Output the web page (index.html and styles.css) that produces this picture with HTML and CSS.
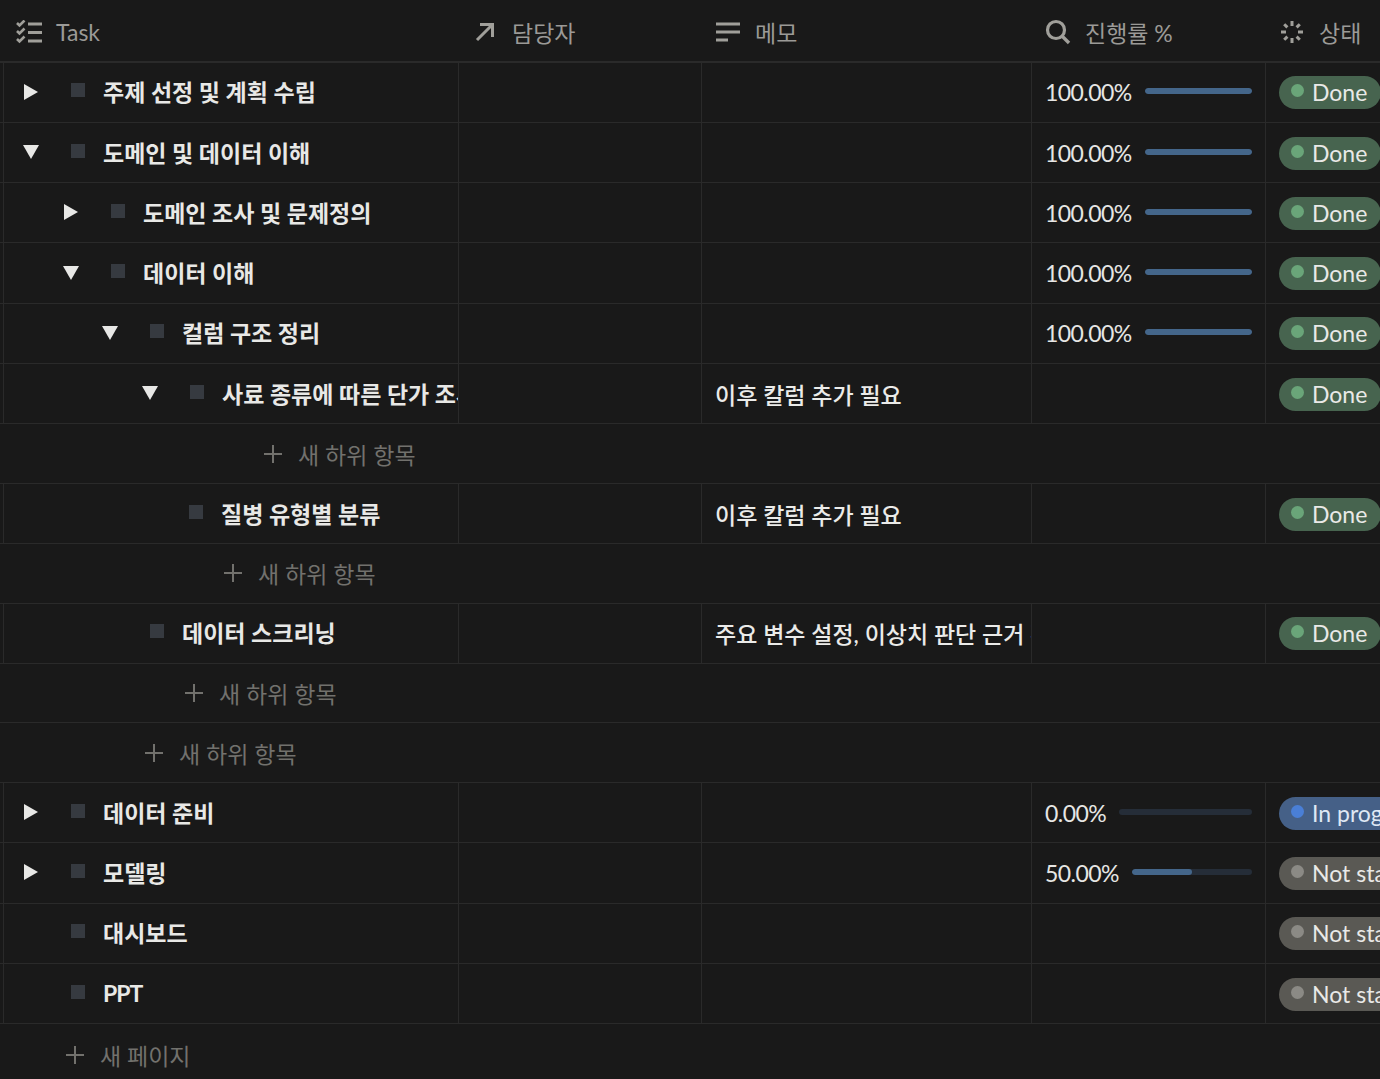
FILE: index.html
```html
<!DOCTYPE html>
<html lang="ko">
<head>
<meta charset="utf-8">
<title>Task</title>
<link rel="stylesheet" href="styles.css">
</head>
<body>
<svg class="defs" width="0" height="0" aria-hidden="true">
  <defs>
    <symbol id="arr-r" viewBox="0 0 14 16"><path d="M0 0L14 8L0 16Z" fill="currentColor"/></symbol>
    <symbol id="arr-d" viewBox="0 0 16 14"><path d="M0 0H16L8 14Z" fill="currentColor"/></symbol>
    <symbol id="plus" viewBox="0 0 18 18"><path d="M9 0V18M0 9H18" stroke="currentColor" stroke-width="2" fill="none"/></symbol>
  </defs>
</svg>
<div class="table">
  <div class="head">
    <div class="hc hc-task">
      <svg class="hi" width="26" height="24" viewBox="0 0 26 24" fill="none" stroke="currentColor"><path d="M1 3l2.500 2.500L8.500 0.500M1 11l2.500 2.500L8.500 8.500M1 19l2.500 2.500L8.500 16.500" stroke-width="2.600"/><path d="M12 4h14M12 12.500h14M12 21h14" stroke-width="3"/></svg>
      <span>Task</span>
    </div>
    <div class="hc hc-owner">
      <svg class="hi" width="20" height="20" viewBox="0 0 20 20" fill="none" stroke="currentColor" stroke-width="3"><path d="M2 18L17 3M5 2.500h12.500V15"/></svg>
      <span>담당자</span>
    </div>
    <div class="hc hc-memo">
      <svg class="hi" width="26" height="20" viewBox="0 0 26 20" fill="currentColor"><rect x="1" y="0.500" width="24" height="3"/><rect x="1" y="8.500" width="24" height="3"/><rect x="1" y="16.500" width="12" height="3"/></svg>
      <span>메모</span>
    </div>
    <div class="hc hc-prog">
      <svg class="hi" width="26" height="26" viewBox="0 0 26 26" fill="none" stroke="currentColor"><circle cx="11" cy="11" r="8.500" stroke-width="3.200"/><path d="M17 17l7 7" stroke-width="3.400"/></svg>
      <span>진행률 %</span>
    </div>
    <div class="hc hc-status">
      <svg class="hi" width="24" height="24" viewBox="0 0 24 24" fill="none" stroke="currentColor" stroke-width="3"><path d="M12 1v5M12 18v5M1 12h5M18 12h5M4.200 4.200l3.200 3.200M16.600 16.600l3.200 3.200M4.200 19.800l3.200-3.200M16.600 7.400l3.200-3.200"/></svg>
      <span>상태</span>
    </div>
  </div>

  <div class="row">
    <div class="c c-task l0"><svg class="tog"><use href="#arr-r"/></svg><i class="sq"></i><b>주제 선정 및 계획 수립</b></div>
    <div class="c c-owner"></div><div class="c c-memo"></div>
    <div class="c c-prog"><span>100.00%</span><div class="bar"><div class="fill full"></div></div></div>
    <div class="c c-status"><span class="pill done"><i></i>Done</span></div>
  </div>
  <div class="row">
    <div class="c c-task l0"><svg class="tog down"><use href="#arr-d"/></svg><i class="sq"></i><b>도메인 및 데이터 이해</b></div>
    <div class="c c-owner"></div><div class="c c-memo"></div>
    <div class="c c-prog"><span>100.00%</span><div class="bar"><div class="fill full"></div></div></div>
    <div class="c c-status"><span class="pill done"><i></i>Done</span></div>
  </div>
  <div class="row">
    <div class="c c-task l1"><svg class="tog"><use href="#arr-r"/></svg><i class="sq"></i><b>도메인 조사 및 문제정의</b></div>
    <div class="c c-owner"></div><div class="c c-memo"></div>
    <div class="c c-prog"><span>100.00%</span><div class="bar"><div class="fill full"></div></div></div>
    <div class="c c-status"><span class="pill done"><i></i>Done</span></div>
  </div>
  <div class="row">
    <div class="c c-task l1"><svg class="tog down"><use href="#arr-d"/></svg><i class="sq"></i><b>데이터 이해</b></div>
    <div class="c c-owner"></div><div class="c c-memo"></div>
    <div class="c c-prog"><span>100.00%</span><div class="bar"><div class="fill full"></div></div></div>
    <div class="c c-status"><span class="pill done"><i></i>Done</span></div>
  </div>
  <div class="row">
    <div class="c c-task l2"><svg class="tog down"><use href="#arr-d"/></svg><i class="sq"></i><b>컬럼 구조 정리</b></div>
    <div class="c c-owner"></div><div class="c c-memo"></div>
    <div class="c c-prog"><span>100.00%</span><div class="bar"><div class="fill full"></div></div></div>
    <div class="c c-status"><span class="pill done"><i></i>Done</span></div>
  </div>
  <div class="row">
    <div class="c c-task l3"><svg class="tog down"><use href="#arr-d"/></svg><i class="sq"></i><b>사료 종류에 따른 단가 조사</b></div>
    <div class="c c-owner"></div><div class="c c-memo">이후 칼럼 추가 필요</div>
    <div class="c c-prog"></div>
    <div class="c c-status"><span class="pill done"><i></i>Done</span></div>
  </div>
  <div class="add a3"><svg class="plus"><use href="#plus"/></svg><span>새 하위 항목</span></div>
  <div class="row">
    <div class="c c-task l3 leaf"><i class="sq"></i><b>질병 유형별 분류</b></div>
    <div class="c c-owner"></div><div class="c c-memo">이후 칼럼 추가 필요</div>
    <div class="c c-prog"></div>
    <div class="c c-status"><span class="pill done"><i></i>Done</span></div>
  </div>
  <div class="add a2"><svg class="plus"><use href="#plus"/></svg><span>새 하위 항목</span></div>
  <div class="row">
    <div class="c c-task l2 leaf"><i class="sq"></i><b>데이터 스크리닝</b></div>
    <div class="c c-owner"></div><div class="c c-memo">주요 변수 설정, 이상치 판단 근거 확인</div>
    <div class="c c-prog"></div>
    <div class="c c-status"><span class="pill done"><i></i>Done</span></div>
  </div>
  <div class="add a1"><svg class="plus"><use href="#plus"/></svg><span>새 하위 항목</span></div>
  <div class="add a0"><svg class="plus"><use href="#plus"/></svg><span>새 하위 항목</span></div>
  <div class="row">
    <div class="c c-task l0"><svg class="tog"><use href="#arr-r"/></svg><i class="sq"></i><b>데이터 준비</b></div>
    <div class="c c-owner"></div><div class="c c-memo"></div>
    <div class="c c-prog"><span>0.00%</span><div class="bar"></div></div>
    <div class="c c-status"><span class="pill prog"><i></i>In progress</span></div>
  </div>
  <div class="row">
    <div class="c c-task l0"><svg class="tog"><use href="#arr-r"/></svg><i class="sq"></i><b>모델링</b></div>
    <div class="c c-owner"></div><div class="c c-memo"></div>
    <div class="c c-prog"><span>50.00%</span><div class="bar"><div class="fill half"></div></div></div>
    <div class="c c-status"><span class="pill none"><i></i>Not started</span></div>
  </div>
  <div class="row">
    <div class="c c-task l0 leaf"><i class="sq"></i><b>대시보드</b></div>
    <div class="c c-owner"></div><div class="c c-memo"></div>
    <div class="c c-prog"></div>
    <div class="c c-status"><span class="pill none"><i></i>Not started</span></div>
  </div>
  <div class="row">
    <div class="c c-task l0 leaf"><i class="sq"></i><b class="latin">PPT</b></div>
    <div class="c c-owner"></div><div class="c c-memo"></div>
    <div class="c c-prog"></div>
    <div class="c c-status"><span class="pill none"><i></i>Not started</span></div>
  </div>
  <div class="add page"><svg class="plus"><use href="#plus"/></svg><span>새 페이지</span></div>
</div>
</body>
</html>
```

FILE: styles.css
```css
* { box-sizing: border-box; }
html, body { margin: 0; height: 100%; overflow: hidden; background: #191919; }
.defs { position: absolute; }
body {
  font-family: Lato, "Noto Sans CJK KR", sans-serif;
  font-size: 23px;
  color: #e6e6e4;
}
.table { width: 1380px; }
.head {
  display: grid;
  grid-template-columns: 459px 243px 330px 234px 114px;
  height: 62.6px;
  border-bottom: 2px solid #2a2a2a;
  color: #9b9a97;
}
.hc { display: flex; align-items: center; gap: 14px; padding-left: 14px; white-space: nowrap; overflow: hidden; padding-top: 4px; }
.hc-task { padding-left: 16px; gap: 14px; }
.hc-owner { padding-left: 16px; gap: 17px; }
.hc-memo { padding-left: 13px; gap: 14px; }
.hc-prog { padding-left: 13px; gap: 14px; }
.hc-status { padding-left: 14px; gap: 15px; }
.hi { flex: none; color: #a09f9a; }

.row {
  display: grid;
  grid-template-columns: 459px 243px 330px 234px 114px;
  height: 60.3px;
  border-bottom: 1px solid #2a2a2a;
  white-space: nowrap;
}
.c { display: flex; align-items: center; border-right: 1px solid #2a2a2a; overflow: hidden; min-width: 0; }
.c-task { border-left: 1px solid #2a2a2a; margin-left: 3px; padding-bottom: 2px; }
.c-memo { padding-left: 13px; color: #ebebe9; font-weight: 500; }
.c-prog { padding-left: 13px; gap: 13px; letter-spacing: -0.55px; }
.c-status { padding-left: 13px; border-right: 0; }
.c-task b { font-weight: 700; color: #e8e8e6; }
.c-task .latin { letter-spacing: -1px; }

.l0 { padding-left: 20px; }
.l1 { padding-left: 60px; }
.l2 { padding-left: 99px; }
.l3 { padding-left: 139px; }
.leaf.l0 { padding-left: 67px; }
.leaf.l2 { padding-left: 146px; }
.leaf.l3 { padding-left: 185px; }

.tog { width: 14px; height: 16px; color: #e8e8e6; flex: none; margin-right: 33px; margin-top: 1px; }
.tog.down { width: 16px; height: 14px; margin-right: 32px; margin-left: -1px; }
.sq { width: 14px; height: 14px; background: #363a40; flex: none; margin-right: 18px; margin-top: -2px; }

.bar { flex: 1; height: 6px; min-width: 0; border-radius: 3px; background: #252d38; margin-right: 13px; margin-top: -2px; overflow: hidden; }
.fill { height: 100%; background: #44668a; border-radius: 3px; }
.full { width: 100%; }
.half { width: 50%; }

.pill {
  display: inline-flex; align-items: center; height: 33px; min-width: 0;
  border-radius: 17px; padding: 0 14px 1px 12px; color: #e9e9e7; flex: none; margin-top: 1px;
}
.pill i { width: 13px; height: 13px; border-radius: 50%; margin-right: 8px; margin-top: -3px; flex: none; }
.done { background: #47644f; }
.done i { background: #6aa579; }
.prog { background: #456087; color: #dfe8f4; }
.prog i { background: #4a7fd6; }
.none { background: #5a5954; }
.none i { background: #8b8a85; }

.add { display: flex; align-items: center; height: 59.5px; border-bottom: 1px solid #2a2a2a; color: #72716d; white-space: nowrap; }
.plus { width: 18px; height: 18px; color: #72716d; flex: none; margin-right: 16px; }
.a3 { padding-left: 264px; }
.a2 { padding-left: 224px; }
.a1 { padding-left: 185px; }
.a0 { padding-left: 145px; }
.page { padding-left: 66px; border-bottom: 0; padding-top: 3px; }
```
